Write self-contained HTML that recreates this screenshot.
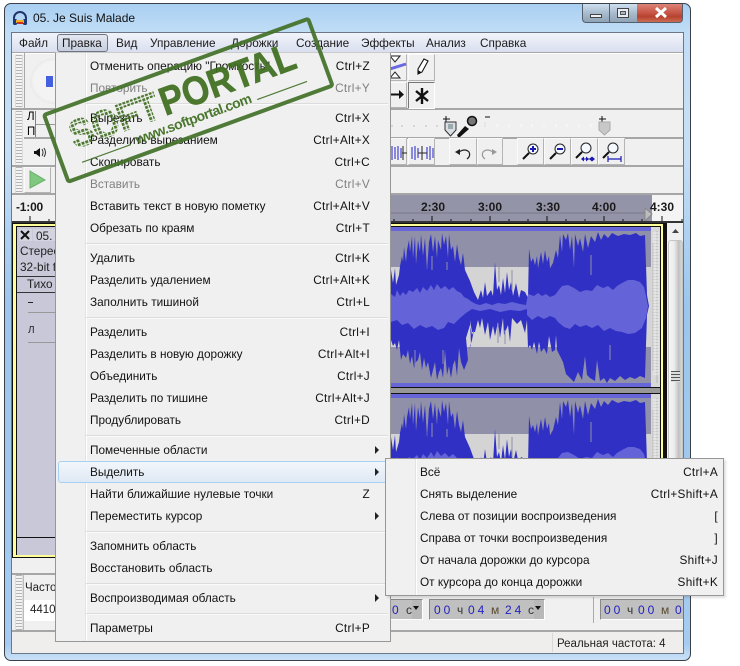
<!DOCTYPE html>
<html><head><meta charset="utf-8"><style>
html,body{margin:0;padding:0;background:#fff}
body{width:740px;height:666px;position:relative;overflow:hidden;font-family:"Liberation Sans",sans-serif;font-size:11.8px;color:#000}
div{position:absolute;box-sizing:border-box;white-space:nowrap}
.mb{top:37px;font-size:11.8px;color:#1a1a1a;line-height:13px}
.panel{background:#f0f0f0}
.i{left:90px;width:280px;height:22px;line-height:23px;color:#111}
.i b{font-weight:normal;position:absolute;right:0;top:0;letter-spacing:.3px}
.d{color:#808080}
.s{left:86px;width:302px;height:2px;background:#dcdcdc;border-bottom:1px solid #fbfbfb}
.a{width:0;height:0;border-left:4px solid #222;border-top:4px solid transparent;border-bottom:4px solid transparent;left:375px}
.j{left:420px;width:298px;height:22px;line-height:23px;color:#111}
.j b{font-weight:normal;position:absolute;right:0;top:0;letter-spacing:.3px}
.btn{background:#f0f0f0;border:1px solid;border-color:#fafafa #b4b4b4 #b4b4b4 #fafafa}
.grip{width:8px;background:repeating-linear-gradient(#b4b4b4 0 1px,#f4f4f4 1px 3px);border-left:1px solid #ddd;border-right:1px solid #ddd}
.ln{background:#a6a6a6;height:2px}
.rt{top:200px;font-size:12px;color:#1a1a1a;font-weight:bold;line-height:14px}
.tm{background:#c0c0c0;border:1px solid;border-color:#888 #fff #fff #888;height:21px;font-size:12px;color:#2222c0;line-height:21px}
.tm span{position:absolute;top:0;letter-spacing:3px}
.tm i{font-style:normal;position:absolute;top:0;color:#333}
</style></head><body>

<!-- window frame -->
<div style="left:4px;top:3px;width:687px;height:658px;border:1px solid #3b4048;border-radius:7px;background:linear-gradient(#a9cff2 0,#c2def6 30px,#c5dff6 150px,#9cc6ee 300px,#a5cbf0 640px,#cfe4f7 658px)"></div>
<div style="left:11px;top:32px;width:673px;height:622px;background:#f0f0f0;border:1px solid #6d7787"></div>

<!-- title -->
<svg style="position:absolute;left:12px;top:11px" width="16" height="15" viewBox="0 0 16 15"><path d="M2 10V7a6 6 0 0 1 12 0v3" fill="none" stroke="#23356c" stroke-width="2"/><rect x="1" y="8" width="4" height="6" rx="1.5" fill="#1c3a78"/><rect x="11" y="8" width="4" height="6" rx="1.5" fill="#1c3a78"/><rect x="4" y="9" width="8" height="3" fill="#f0b020"/><rect x="5" y="11" width="6" height="2" fill="#d03020"/></svg>
<div style="left:33px;top:11px;font-size:12px;line-height:15px;color:#111">05. Je Suis Malade</div>

<!-- caption buttons -->
<div style="left:582px;top:4px;width:27px;height:19px;border:1px solid #55606e;border-top:none;border-right:none;border-radius:0 0 0 4px;background:linear-gradient(#cfe0f0,#a9bccd 50%,#8fa3b6)"></div>
<div style="left:590px;top:14px;width:12px;height:4px;border:1px solid #444;background:#eef2f6"></div>
<div style="left:609px;top:4px;width:28px;height:19px;border-left:1px solid #55606e;border-bottom:1px solid #55606e;background:linear-gradient(#cfe0f0,#a9bccd 50%,#8fa3b6)"></div>
<div style="left:617px;top:8px;width:12px;height:10px;border:1px solid #444;background:#e6edf3"><div style="left:2px;top:2px;width:6px;height:4px;border:1px solid #555;background:#aab8c6"></div></div>
<div style="left:637px;top:4px;width:46px;height:19px;border:1px solid #55606e;border-top:none;border-left:none;border-radius:0 0 4px 0;background:linear-gradient(#dc8478,#c9594a 45%,#b6422f 70%,#cc6d55)"></div>
<svg style="position:absolute;left:654px;top:7px" width="14" height="12"><path d="M2 1l10 9M12 1L2 10" stroke="#fff" stroke-width="3"/></svg>

<!-- menu bar -->
<div style="left:12px;top:33px;width:671px;height:19px;background:linear-gradient(#f2f4fa,#d9dfef)"></div>
<div style="left:12px;top:52px;width:671px;height:2px;background:#a8a8a8;border-bottom:1px solid #fff"></div>
<div class="mb" style="left:19px">Файл</div>
<div style="left:57px;top:34px;width:51px;height:18px;border:1px solid #6f7580;border-radius:3px;background:linear-gradient(#e4e8f2,#c6cede)"></div>
<div class="mb" style="left:62px">Правка</div>
<div class="mb" style="left:116px">Вид</div>
<div class="mb" style="left:150px">Управление</div>
<div class="mb" style="left:231px">Дорожки</div>
<div class="mb" style="left:296px">Создание</div>
<div class="mb" style="left:361px">Эффекты</div>
<div class="mb" style="left:426px">Анализ</div>
<div class="mb" style="left:480px">Справка</div>

<!-- toolbars left -->
<div class="grip" style="left:15px;top:55px;height:52px"></div>
<div style="left:24px;top:53px;width:1px;height:55px;background:#a8a8a8"></div>
<div style="left:30px;top:58px;width:50px;height:46px;border-radius:50%;background:radial-gradient(#f3f3f3 60%,#e2e2e2 78%,#f0f0f0)"></div>
<div style="left:46px;top:76px;width:7px;height:11px;background:#4460e0"></div>
<div class="ln" style="left:12px;top:108px;width:671px"></div>
<div class="grip" style="left:15px;top:111px;height:53px"></div>
<div style="left:27px;top:111px;font-size:11.5px">Л</div>
<div style="left:27px;top:126px;font-size:11.5px">П</div>
<div style="left:35px;top:111px;width:1px;height:26px;background:#5a9a5a"></div>
<div style="left:36px;top:124px;width:20px;height:1px;background:#999"></div>
<svg style="position:absolute;left:33px;top:147px" width="14" height="11"><path d="M1 4h2l4-3v9L3 7H1z" fill="#111"/><path d="M9 2q2 3.500 0 7M11 1q3 4.500 0 9" fill="none" stroke="#333"/></svg>
<div class="ln" style="left:24px;top:137px;width:659px"></div>
<div class="ln" style="left:12px;top:165px;width:671px"></div>
<div class="grip" style="left:15px;top:167px;height:26px"></div>
<div class="btn" style="left:24px;top:167px;width:27px;height:26px"></div>
<svg style="position:absolute;left:29px;top:170px" width="18" height="20"><path d="M1 1l15 9L1 18z" fill="#7fc87f" stroke="#6ab06a"/></svg>
<div class="ln" style="left:12px;top:193px;width:671px"></div>

<!-- toolbars right -->
<div class="btn" style="left:380px;top:54px;width:27px;height:27px"></div>
<svg style="position:absolute;left:390px;top:55px" width="17" height="24"><path d="M0 1h10l-5 6zM0 23h10l-5-6z" fill="#fff" stroke="#222"/><path d="M0 14l16-5" stroke="#6a6ae0" stroke-width="3"/></svg>
<div class="btn" style="left:408px;top:54px;width:27px;height:27px"></div>
<svg style="position:absolute;left:414px;top:57px" width="16" height="21"><path d="M10 2l4 2-6 11-4 2 0-5z" fill="#fff" stroke="#111" stroke-width="1.100"/><path d="M4 17l0-4 3 2z" fill="#111"/></svg>
<div class="btn" style="left:380px;top:82px;width:27px;height:26px"></div>
<svg style="position:absolute;left:390px;top:88px" width="15" height="13"><path d="M1 6.500h9" stroke="#111" stroke-width="2"/><path d="M9 2l5 4.500-5 4.500z" fill="#111"/></svg>
<div style="left:408px;top:82px;width:27px;height:27px;border:1px solid;border-color:#777 #fff #fff #777"></div>
<svg style="position:absolute;left:414px;top:87px" width="16" height="18"><path d="M8 1v16M2 4l12 10M14 4L2 14" stroke="#111" stroke-width="2.400"/></svg>

<svg style="position:absolute;left:385px;top:109px" width="298" height="60" viewBox="385 109 298 60">
<path d="M392 125v2M402 125v2M414 125v2M426 125v2M437 125v2" stroke="#bbb"/>
<path d="M446 116v7M443 119h7" stroke="#111"/>
<path d="M445 122h11v8l-5.500 6-5.500-6z" fill="#d8dde6" stroke="#333"/><path d="M448 124h5v5h-5z" fill="#9aa"/>
<path d="M458 137l-1-2 8-9 4 3-9 8z" fill="#111"/><circle cx="472" cy="121" r="4.500" fill="#777" stroke="#111" stroke-width="1.500"/>
<path d="M485 117h5" stroke="#111"/>
<path d="M485 122v5" stroke="#ddd"/>
<path d="M497 124v3M509 124v3M521 124v3M532 124v3M544 124v3M556 124v3M567 124v3M579 124v3M591 124v3" stroke="#fafafa"/>
<path d="M602 116v7M599 119h7" stroke="#111"/>
<path d="M599 122h11v8l-5.500 5-5.500-5z" fill="#c8c8c8" stroke="#aaa"/>
</svg>

<div class="btn" style="left:380px;top:138px;width:27px;height:27px"></div>
<div class="btn" style="left:408px;top:138px;width:27px;height:27px"></div>
<svg style="position:absolute;left:390px;top:142px" width="44" height="20" viewBox="390 142 44 20" fill="none" stroke="#2020c8">
<path d="M392 146v14M395 147v12M398 146v14M401 148v10" /><path d="M404 153h-2" stroke="#222"/><path d="M403 146v14" stroke="#222"/><path d="M404 153h3" stroke="#222"/>
<path d="M412 147v12M415 146v14M418 148v10M427 147v12M430 146v14M433 148v10"/><path d="M418 153h9M422 146v14" stroke="#222"/>
</svg>
<div class="btn" style="left:449px;top:138px;width:28px;height:27px"></div>
<div class="btn" style="left:477px;top:138px;width:26px;height:27px"></div>
<svg style="position:absolute;left:449px;top:138px" width="54" height="27" fill="none"><path d="M10 14q6-4 10 0q2 4-2 7" stroke="#222" stroke-width="1.200"/><path d="M6 14l5-3v6z" fill="#222"/><path d="M44 14q-6-4-10 0q-2 4 2 7" stroke="#999" stroke-width="1.200"/><path d="M48 14l-5-3v6z" fill="#999"/></svg>
<div class="btn" style="left:517px;top:138px;width:27px;height:27px"></div>
<div class="btn" style="left:544px;top:138px;width:27px;height:27px"></div>
<div class="btn" style="left:571px;top:138px;width:27px;height:27px"></div>
<div class="btn" style="left:598px;top:138px;width:27px;height:27px"></div>
<svg style="position:absolute;left:517px;top:138px" width="108" height="27" viewBox="517 138 108 27" fill="none">
<circle cx="533" cy="149" r="5" fill="#f4f8ff" stroke="#222"/><path d="M529 153l-6 6" stroke="#111" stroke-width="2"/><path d="M533 146v6M530 149h6" stroke="#1a1ab0" stroke-width="2"/>
<circle cx="560" cy="149" r="5" fill="#f4f8ff" stroke="#222"/><path d="M556 153l-6 6" stroke="#111" stroke-width="2"/><path d="M557 149h6" stroke="#1a1ab0" stroke-width="2"/>
<circle cx="586" cy="148" r="5" fill="#f4f8ff" stroke="#222"/><path d="M582 152l-6 6" stroke="#111" stroke-width="2"/><path d="M582 159h12" stroke="#1a1ab0"/><path d="M581 159l3-2.500v5zM589 159l-3-2.500v5zM589 159l3-2.500v5zM595 159l-3-2.500v5z" fill="#1a1ab0"/>
<circle cx="613" cy="148" r="5" fill="#f4f8ff" stroke="#222"/><path d="M609 152l-6 6" stroke="#111" stroke-width="2"/><path d="M608 159h13M608 156v6M621 156v6" stroke="#1a1ab0" stroke-width="1.200"/>
</svg>

<!-- ruler -->
<div style="left:13px;top:195px;width:42px;height:26px;background:#f0f0f0"></div>
<div style="left:55px;top:195px;width:597px;height:26px;background:#9494a8"></div>
<div style="left:652px;top:195px;width:31px;height:26px;background:#f4f4f4"></div>
<div class="rt" style="left:16px;letter-spacing:-.2px">-1:00</div>
<div class="rt" style="left:421px">2:30</div>
<div class="rt" style="left:478px">3:00</div>
<div class="rt" style="left:536px">3:30</div>
<div class="rt" style="left:592px">4:00</div>
<div class="rt" style="left:650px">4:30</div>
<svg style="position:absolute;left:13px;top:205px" width="670" height="17" viewBox="13 205 670 17">
<path d="M390 213h255" stroke="#787888"/>
<path d="M645 208l7 6-7 7z" fill="#bcbcbc" stroke="#888"/>
<path d="M394 219v2M413 219v2M432 216v5M451 219v2M471 219v2M490 216v5M509 219v2M528 219v2M547 216v5M566 219v2M585 219v2M604 216v5M623 219v2M642 219v2M662 216v5M682 219v2M30 216v5M49 219v2" stroke="#111"/>
</svg>
<div style="left:12px;top:221px;width:671px;height:2px;background:#333"></div>

<!-- track area -->
<div style="left:12px;top:223px;width:655px;height:335px;background:#111"></div>
<div style="left:13px;top:224px;width:650px;height:333px;background:#ffff99"></div>
<div style="left:16px;top:226px;width:645px;height:329px;background:#111"></div>
<div style="left:17px;top:227px;width:643px;height:310px;background:#c8c8d8"></div>
<div style="left:17px;top:538px;width:643px;height:17px;background:#c8c8d8"></div>
<div style="left:19px;top:229px;width:13px;height:12px;background:#d4d4e0"></div>
<svg style="position:absolute;left:19px;top:230px" width="12" height="11"><path d="M2 1l8 8M10 1L2 9" stroke="#111" stroke-width="2"/></svg>
<div style="left:33px;top:229px;width:24px;height:12px;background:#d4d4e0"></div>
<div style="left:36px;top:229px;color:#222">05.</div>
<div style="left:20px;top:244px;color:#222">Стерес</div>
<div style="left:20px;top:260px;color:#222">32-bit f</div>
<div style="left:17px;top:276px;width:40px;height:1px;background:#333"></div>
<div style="left:17px;top:292px;width:40px;height:1px;background:#333"></div>
<div style="left:27px;top:277px;color:#222">Тихо</div>
<div style="left:28px;top:302px;width:5px;height:1px;background:#222"></div>
<div style="left:28px;top:312px;width:28px;height:1px;background:#999"></div>
<div style="left:28px;top:342px;width:28px;height:1px;background:#999"></div>
<div style="left:28px;top:325px;font-size:10px;color:#222">Л</div>

<svg style="position:absolute;left:385px;top:225px" width="280" height="335" viewBox="385 225 280 335">
<defs>
<g id="w">
<rect x="385" y="227" width="266" height="4" fill="#6666d8"/>
<rect x="385" y="231" width="266" height="152" fill="#9090a8"/>
<rect x="385" y="267" width="266" height="80" fill="#d4d4d4"/>
<rect x="385" y="383" width="266" height="4" fill="#6666d8"/>
<path fill="#3030c4" d="M385 270L391 270 393 283 395 268 396 285 399 275 400 266 402 256 403 262 404 247 406 262 407 250 409 240 410 252 412 236 413 258 415 236 416 264 418 240 420 252 421 234 423 256 425 238 427 270 429 242 431 234 433 252 435 236 437 258 438 240 441 250 442 233 444 245 446 236 448 258 449 234 451 250 453 246 455 262 457 244 459 258 461 265 463 253 465 270 470 281 474 292 478 300 481 290 483 298 485 282 487 296 491 290 493 296 495 262 497 290 499 285 501 295 503 278 505 293 507 272 509 290 511 282 513 296 516 283 519 298 521 290 525 292 528 298 529 249 531 262 533 258 535 265 537 256 538 268 541 252 543 264 545 250 547 262 549 256 550 268 553 263 556 250 558 258 560 235 562 252 563 234 566 240 568 233 570 250 572 236 574 268 575 234 578 246 580 238 583 252 585 234 588 248 591 236 595 242 598 232 601 240 604 234 608 238 612 233 618 236 624 234 630 235 636 233 640 236 645 235 646 265 647 295 649 306 647 315 646 345 645 378 640 376 635 379 630 377 625 380 620 376 615 381 610 378 607 383 604 378 600 381 597 360 595 381 590 378 587 375 585 356 582 380 578 372 574 382 570 378 566 374 563 362 560 356 557 350 556 335 555 350 552 352 549 336 547 354 544 348 541 352 539 342 537 354 534 342 532 350 530 345 528 348 527 320 525 333 521 320 517 324 512 318 510 342 508 325 504 335 503 318 500 338 498 322 495 336 493 326 490 340 488 322 485 335 482 318 480 328 478 320 475 332 472 332 470 320 471 345 469 350 472 340 474 330 472 335 470 325 466 338 468 360 464 370 461 362 459 348 457 376 455 360 453 365 451 378 449 366 447 375 445 350 443 378 441 368 439 372 437 380 435 362 433 370 431 378 428 362 426 368 424 358 422 370 420 352 418 360 416 362 414 368 412 356 410 364 408 350 406 358 403 354 401 360 399 340 397 350 395 343 393 346 391 340 385 340z"/>
<path fill="#6464d8" d="M385 295L391 294 395 297 397 290 400 296 403 292 406 295 409 290 413 292 417 288 420 293 423 287 427 291 431 285 434 290 437 284 441 289 445 286 449 290 453 287 457 291 461 293 464 297 468 299 472 302 476 304 480 305 486 303 492 305 498 303 505 304 512 302 520 304 526 305 528 294 534 296 538 293 542 296 546 294 550 297 555 295 558 291 562 286 568 285 574 288 580 292 586 290 592 291 597 285 603 288 608 286 613 290 617 286 622 283 628 280 634 280 640 282 644 287 646 296 648 306 646 318 642 328 635 333 628 334 622 332 616 331 610 328 604 331 598 325 592 328 586 325 580 327 575 324 570 329 564 327 558 322 555 318 550 316 544 319 538 316 532 320 527 315 527 309 520 311 510 310 500 312 490 309 480 311 472 309 466 313 460 318 454 324 448 322 444 328 438 330 432 326 426 328 420 325 414 329 408 323 402 325 397 320 391 322 385 320z"/>
<path d="M432 270v-14M512 290v-20M499 282v-20M591 275v-20M447 270v-8M505 330v14M498 325v18M610 345v15M415 350v18M443 350v14" stroke="#9090a8"/>
<rect x="651" y="227" width="9" height="160" fill="#d8d8d8"/>
<path d="M653 243v128M657 231v152" stroke="#b8b8b8"/>
<path d="M653 233H659M653 236H659M653 239H659M653 242H659M653 245H659M653 248H659M653 251H659M653 254H659M653 257H659M653 260H659M653 263H659M653 266H659M653 269H659M653 272H659M653 275H659M653 278H659M653 281H659M653 284H659M653 287H659M653 290H659M653 293H659M653 296H659M653 299H659M653 302H659M653 305H659M653 308H659M653 311H659M653 314H659M653 317H659M653 320H659M653 323H659M653 326H659M653 329H659M653 332H659M653 335H659M653 338H659M653 341H659M653 344H659M653 347H659M653 350H659M653 353H659M653 356H659M653 359H659M653 362H659M653 365H659M653 368H659M653 371H659M653 374H659" stroke="#f0f0f0"/>
</g>
</defs>
<use href="#w"/>
<use href="#w" transform="translate(0 167)"/>
<rect x="385" y="387" width="275" height="1" fill="#111"/>
<rect x="385" y="388" width="275" height="5" fill="#989898"/>
<rect x="385" y="393" width="275" height="1" fill="#111"/>
</svg>

<!-- scrollbar -->
<div style="left:667px;top:223px;width:16px;height:350px;background:#f0f0f0"></div>
<svg style="position:absolute;left:667px;top:223px" width="16" height="18"><path d="M5 10l3.500-4 3.500 4z" fill="#444"/></svg>
<div style="left:668px;top:240px;width:15px;height:330px;background:linear-gradient(90deg,#f4f4f4,#ececec 40%,#c0c0c0 75%,#d8d8d8);border:1px solid #c4c4c4;border-radius:3px"></div>
<div style="left:671px;top:371px;width:9px;height:11px;background:repeating-linear-gradient(#555 0 1px,#ddd 1px 3px)"></div>

<!-- bottom toolbar -->
<div style="left:12px;top:558px;width:655px;height:17px;background:#f0f0f0"></div>
<div class="ln" style="left:12px;top:573px;width:671px"></div>
<div class="grip" style="left:15px;top:575px;height:55px"></div>
<div style="left:23px;top:575px;width:1px;height:55px;background:#bbb"></div>
<div style="left:25px;top:582px;font-size:11.5px;color:#222">Часто</div>
<div style="left:24px;top:600px;width:32px;height:21px;background:#fff;border-radius:2px"></div>
<div style="left:30px;top:604px;font-size:11.5px;color:#222">4410</div>

<div class="tm" style="left:380px;top:599px;width:43px"><span style="left:11px">0</span><i style="left:25px">с</i></div>
<div style="left:412px;top:600px;width:10px;height:19px;background:#b8b8b8"></div>
<div style="left:413px;top:606px;width:0;height:0;border:3.5px solid transparent;border-top:4px solid #111"></div>
<div class="tm" style="left:429px;top:599px;width:116px"><span style="left:4px">00</span><i style="left:27px">ч</i><span style="left:38px">04</span><i style="left:61px;color:#5a4a30">м</i><span style="left:75px">24</span><i style="left:98px">с</i></div>
<div style="left:534px;top:600px;width:10px;height:19px;background:#b8b8b8"></div>
<div style="left:535px;top:606px;width:0;height:0;border:3.5px solid transparent;border-top:4px solid #111"></div>
<div style="left:593px;top:597px;width:1px;height:26px;background:#aaa"></div>
<div class="tm" style="left:600px;top:599px;width:83px;border-right:none"><span style="left:3px">00</span><i style="left:26px">ч</i><span style="left:37px">00</span><i style="left:60px;color:#5a4a30">м</i><span style="left:74px">0</span></div>

<!-- status -->
<div class="ln" style="left:12px;top:630px;width:671px"></div>
<div style="left:12px;top:632px;width:671px;height:21px;background:#f0eeec"></div>
<div style="left:552px;top:633px;width:1px;height:19px;background:#d8d8d8"></div>
<div style="left:557px;top:638px;font-size:11.5px;color:#222">Реальная частота: 4</div>

<!-- main menu -->
<div class="panel" style="left:55px;top:52px;width:336px;height:590px;border:1px solid #979797;border-top:1px solid #ccc"></div>
<div style="left:85px;top:53px;width:2px;height:588px;background:#e2e3e3;border-right:1px solid #fff"></div>
<div style="left:58px;top:461px;width:330px;height:22px;border:1px solid #a8d0f0;border-radius:3px;background:linear-gradient(#f2f6fb,#dfe9f5)"></div>

<div class="i" style="top:55px">Отменить операцию "Громкость"<b>Ctrl+Z</b></div>
<div class="i d" style="top:77px">Повторить<b>Ctrl+Y</b></div>
<div class="s" style="top:103px"></div>
<div class="i" style="top:107px">Вырезать<b>Ctrl+X</b></div>
<div class="i" style="top:129px">Разделить вырезанием<b>Ctrl+Alt+X</b></div>
<div class="i" style="top:151px">Скопировать<b>Ctrl+C</b></div>
<div class="i d" style="top:173px">Вставить<b>Ctrl+V</b></div>
<div class="i" style="top:195px">Вставить текст в новую пометку<b>Ctrl+Alt+V</b></div>
<div class="i" style="top:217px">Обрезать по краям<b>Ctrl+T</b></div>
<div class="s" style="top:243px"></div>
<div class="i" style="top:247px">Удалить<b>Ctrl+K</b></div>
<div class="i" style="top:269px">Разделить удалением<b>Ctrl+Alt+K</b></div>
<div class="i" style="top:291px">Заполнить тишиной<b>Ctrl+L</b></div>
<div class="s" style="top:317px"></div>
<div class="i" style="top:321px">Разделить<b>Ctrl+I</b></div>
<div class="i" style="top:343px">Разделить в новую дорожку<b>Ctrl+Alt+I</b></div>
<div class="i" style="top:365px">Объединить<b>Ctrl+J</b></div>
<div class="i" style="top:387px">Разделить по тишине<b>Ctrl+Alt+J</b></div>
<div class="i" style="top:409px">Продублировать<b>Ctrl+D</b></div>
<div class="s" style="top:435px"></div>
<div class="i" style="top:439px">Помеченные области</div><div class="a" style="top:446px"></div>
<div class="i" style="top:461px">Выделить</div><div class="a" style="top:468px"></div>
<div class="i" style="top:483px">Найти ближайшие нулевые точки<b>Z</b></div>
<div class="i" style="top:505px">Переместить курсор</div><div class="a" style="top:512px"></div>
<div class="s" style="top:531px"></div>
<div class="i" style="top:535px">Запомнить область</div>
<div class="i" style="top:557px">Восстановить область</div>
<div class="s" style="top:583px"></div>
<div class="i" style="top:587px">Воспроизводимая область</div><div class="a" style="top:594px"></div>
<div class="s" style="top:613px"></div>
<div class="i" style="top:617px">Параметры<b>Ctrl+P</b></div>

<!-- submenu -->
<div class="panel" style="left:385px;top:458px;width:339px;height:138px;border:1px solid #979797;box-shadow:2px 2px 2px rgba(0,0,0,.12)"></div>
<div style="left:415px;top:459px;width:2px;height:136px;background:#e2e3e3;border-right:1px solid #fff"></div>
<div class="j" style="top:461px">Всё<b>Ctrl+A</b></div>
<div class="j" style="top:483px">Снять выделение<b>Ctrl+Shift+A</b></div>
<div class="j" style="top:505px">Слева от позиции воспроизведения<b>[</b></div>
<div class="j" style="top:527px">Справа от точки воспроизведения<b>]</b></div>
<div class="j" style="top:549px">От начала дорожки до курсора<b>Shift+J</b></div>
<div class="j" style="top:571px">От курсора до конца дорожки<b>Shift+K</b></div>

<!-- stamp -->
<svg style="position:absolute;left:0;top:0" width="740" height="666" viewBox="0 0 740 666">
<defs><pattern id="dots" width="4" height="4" patternUnits="userSpaceOnUse"><rect width="2.8" height="2.8" fill="#3f6e20"/></pattern></defs>
<g transform="translate(45 113) rotate(-20)" font-family="Liberation Sans, sans-serif" fill="#3f6e20" opacity=".93">
<rect x="-1.5" y="1.5" width="281" height="71" fill="none" stroke="#44722a" stroke-width="4" rx="2"/>
<text x="16" y="44" font-size="39" font-weight="bold" textLength="93" lengthAdjust="spacingAndGlyphs" fill="url(#dots)" stroke="url(#dots)" stroke-width="1.2">SOFT</text>
<text x="112" y="44" font-size="40" font-weight="bold" textLength="142" lengthAdjust="spacingAndGlyphs" stroke="#3f6e20" stroke-width=".6">PORTAL</text>
<text x="76" y="61" font-size="14" font-weight="bold" textLength="123">www.softportal.com</text>
<path d="M18 59h52M204 60h53" stroke="#44722a" stroke-width="1.200"/>
</g>
</svg>
</body></html>
